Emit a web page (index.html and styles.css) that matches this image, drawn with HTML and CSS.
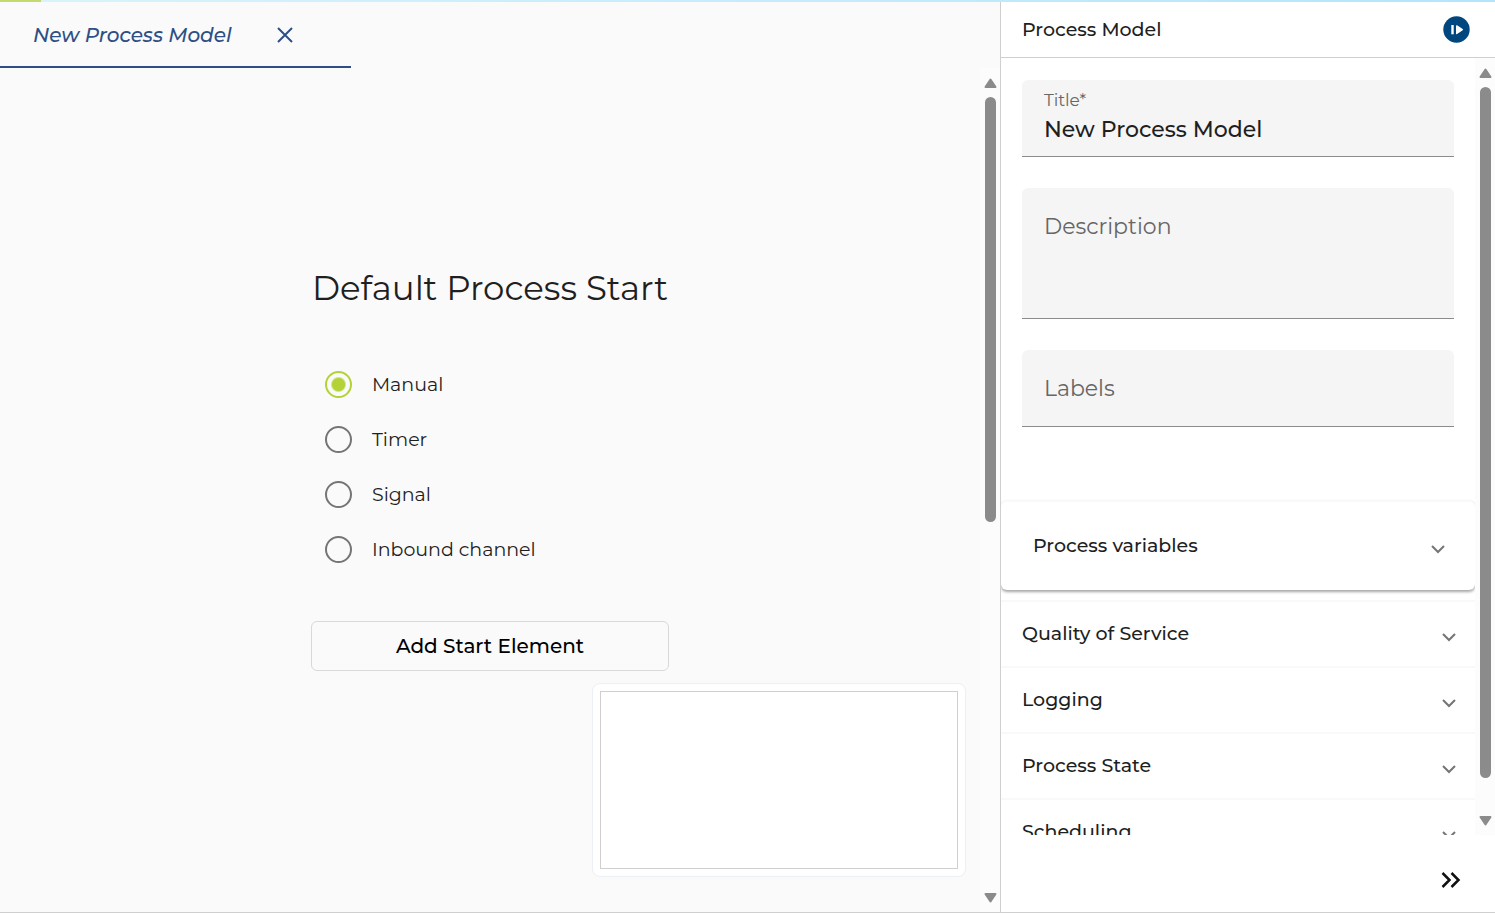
FILE: index.html
```html
<!DOCTYPE html>
<html lang="en">
<head>
<meta charset="utf-8">
<title>New Process Model</title>
<link rel="stylesheet" href="styles.css">
</head>
<body>
<div class="progress"><div class="progress-value"></div></div>
<div class="workspace">
  <main class="editor">
    <div class="tabs">
      <div class="tab">
        <a class="tab-link" href="#model">New Process Model</a>
        <button class="icon-button" type="button" aria-label="Close tab">
          <svg width="16" height="16" viewBox="0 0 16 16" fill="none" stroke="currentColor" stroke-width="2"><path d="M1 1l14 14M15 1L1 15"/></svg>
        </button>
      </div>
    </div>
    <div class="canvas-area">
      <div class="canvas" id="model">
        <form class="start">
          <h1 class="start-title" id="start-title">Default Process Start</h1>
          <div class="options" role="radiogroup" aria-labelledby="start-title">
            <label class="option"><input class="radio" type="radio" name="start" checked>Manual</label>
            <label class="option"><input class="radio" type="radio" name="start">Timer</label>
            <label class="option"><input class="radio" type="radio" name="start">Signal</label>
            <label class="option"><input class="radio" type="radio" name="start">Inbound channel</label>
          </div>
          <button class="add-button" type="button">Add Start Element</button>
        </form>
        <div class="minimap"><div class="minimap-view"></div></div>
      </div>
      <div class="scrollbar" aria-hidden="true">
        <svg class="arrow" width="13" height="10" viewBox="0 0 13 10"><path d="M6.5 1.5L11.5 9h-10z"/></svg>
        <div class="track"><div class="thumb thumb-canvas"></div></div>
        <svg class="arrow" width="13" height="10" viewBox="0 0 13 10"><path d="M6.5 8.5L11.5 1h-10z"/></svg>
      </div>
    </div>
  </main>
  <aside class="panel">
    <header class="panel-header">
      <h2 class="panel-title">Process Model</h2>
      <button class="icon-button" type="button" aria-label="Run">
        <svg width="27" height="27" viewBox="0 0 27 27"><circle cx="13.5" cy="13.5" r="13.2" fill="#00467f"/><path d="M8.3 9h2.4v9.3H8.3z" fill="#fff"/><path d="M13.7 9.9l5.6 3.8-5.6 3.8z" fill="#fff" stroke="#fff" stroke-width="1.4" stroke-linejoin="round"/></svg>
      </button>
    </header>
    <div class="panel-body">
      <div class="panel-content">
        <div class="fields">
          <div class="field">
            <label class="float-label" for="title">Title*</label>
            <input class="field-input" id="title" type="text" value="New Process Model">
          </div>
          <div class="field field-stacked field-tall">
            <label class="field-label" for="description">Description</label>
            <textarea class="field-input" id="description"></textarea>
          </div>
          <div class="field field-stacked">
            <label class="field-label" for="labels">Labels</label>
            <input class="field-input" id="labels" type="text">
          </div>
        </div>
        <button class="section section-raised" type="button">Process variables<svg class="chevron" width="14" height="9" viewBox="0 0 14 9"><path d="M1 1l6 6 6-6"/></svg></button>
        <div class="section-group">
          <button class="section" type="button">Quality of Service<svg class="chevron" width="14" height="9" viewBox="0 0 14 9"><path d="M1 1l6 6 6-6"/></svg></button>
          <button class="section" type="button">Logging<svg class="chevron" width="14" height="9" viewBox="0 0 14 9"><path d="M1 1l6 6 6-6"/></svg></button>
          <button class="section" type="button">Process State<svg class="chevron" width="14" height="9" viewBox="0 0 14 9"><path d="M1 1l6 6 6-6"/></svg></button>
          <button class="section" type="button">Scheduling<svg class="chevron" width="14" height="9" viewBox="0 0 14 9"><path d="M1 1l6 6 6-6"/></svg></button>
        </div>
      </div>
      <div class="scrollbar" aria-hidden="true">
        <svg class="arrow" width="13" height="10" viewBox="0 0 13 10"><path d="M6.5 1.5L11.5 9h-10z"/></svg>
        <div class="track"><div class="thumb thumb-panel"></div></div>
        <svg class="arrow" width="13" height="10" viewBox="0 0 13 10"><path d="M6.5 8.5L11.5 1h-10z"/></svg>
      </div>
    </div>
    <footer class="panel-footer">
      <button class="icon-button" type="button" aria-label="Collapse panel">
        <svg width="20" height="16" viewBox="0 0 20 16" fill="none" stroke="#111" stroke-width="2.5"><path d="M1.5 1l7 7-7 7M10.5 1l7 7-7 7"/></svg>
      </button>
    </footer>
  </aside>
</div>
</body>
</html>
```
FILE: styles.css
```css
* { box-sizing: border-box; }

body {
  margin: 0;
  height: 100vh;
  display: flex;
  flex-direction: column;
  overflow: hidden;
  border-bottom: 1px solid #cfcfcf;
  background: #fafafa;
  color: #1f1f1f;
  font-family: Montserrat, Inter, sans-serif;
  font-size: 19px;
}

h1, h2 { margin: 0; }

button, input, textarea {
  font: inherit;
  color: inherit;
}

.progress {
  flex: none;
  height: 2px;
  background: linear-gradient(90deg, #d9f3fc, #b3e5fa);
}

.progress-value {
  width: 41px;
  height: 100%;
  background: #c3db6e;
}

.workspace {
  flex: 1;
  min-height: 0;
  display: grid;
  grid-template-columns: 202fr 100fr;
  grid-template-rows: minmax(0, 1fr);
}

.editor, .panel {
  display: flex;
  flex-direction: column;
  min-width: 0;
}

.icon-button {
  display: flex;
  padding: 0;
  border: 0;
  background: none;
  cursor: pointer;
}

.tabs { display: flex; }

.tab {
  display: flex;
  align-items: center;
  justify-content: space-between;
  width: 351px;
  height: 66px;
  padding: 2px 58px 0 33px;
  border-bottom: 2px solid #2d4f86;
  color: #2d4f86;
}

.tab-link {
  color: inherit;
  font-size: 20px;
  font-style: italic;
  font-weight: 500;
  text-decoration: none;
}

.canvas-area, .panel-body {
  flex: 1;
  min-height: 0;
  display: flex;
}

.canvas {
  flex: 1;
  position: relative;
  min-width: 0;
}

.start {
  display: flex;
  flex-direction: column;
  width: 358px;
  margin: 0 auto;
  padding-top: 196px;
}

.start-title {
  font-size: 34px;
  font-weight: 400;
  line-height: 48px;
  text-align: center;
  white-space: nowrap;
}

.options {
  padding: 45px 14px 44px;
}

.option {
  display: flex;
  align-items: center;
  gap: 20px;
  height: 55px;
  font-weight: 400;
}

.radio {
  appearance: none;
  width: 27px;
  height: 27px;
  margin: 0;
  border: 2px solid #757575;
  border-radius: 50%;
}

.radio:checked {
  border-color: #b2d235;
  background: radial-gradient(circle, #b2d235 6px, transparent 8px);
}

.add-button {
  height: 50px;
  border: 1px solid #d9d9d9;
  border-radius: 6px;
  background: transparent;
  color: #000;
  font-size: 20px;
  font-weight: 500;
}

.minimap {
  position: absolute;
  right: 14px;
  bottom: 35px;
  width: 374px;
  height: 194px;
  padding: 7px;
  border: 1px solid #eaf0f6;
  border-radius: 8px;
  background: #fff;
}

.minimap-view {
  height: 100%;
  border: 1px solid #cfcfcf;
}

.scrollbar {
  flex: none;
  display: flex;
  flex-direction: column;
  align-items: center;
  gap: 9px;
  width: 20px;
  padding: 10px 0 9px 1px;
  background: #fcfcfc;
}

.arrow {
  flex: none;
  fill: #8b8b8b;
  stroke: #8b8b8b;
  stroke-width: 2;
  stroke-linejoin: round;
}

.track {
  flex: 1;
  min-height: 0;
}

.thumb {
  width: 11px;
  border-radius: 6px;
  background: #8b8b8b;
}

.thumb-canvas { height: 54%; }

.thumb-panel { height: 96%; }

.panel {
  border-left: 1px solid #cfcfcf;
  background: #fff;
}

.panel-header {
  flex: none;
  display: flex;
  align-items: center;
  justify-content: space-between;
  height: 56px;
  padding: 0 25px 0 21px;
  border-bottom: 1px solid #cfcfcf;
}

.panel-title {
  font-size: 19px;
  font-weight: 500;
}

.panel-content {
  flex: 1;
  min-width: 0;
  overflow: hidden;
}

.fields {
  display: grid;
  gap: 31px;
  padding: 22px 21px 73px;
}

.field {
  display: flex;
  flex-direction: column;
  height: 77px;
  padding: 9px 22px;
  border-bottom: 1px solid #8c8c8c;
  border-radius: 6px 6px 0 0;
  background: #f5f5f5;
}

.field-stacked {
  display: grid;
  padding: 22px;
}

.field-tall { height: 131px; }

.float-label {
  color: #666;
  font-size: 17px;
  font-weight: 400;
  line-height: 22px;
}

.field-label {
  grid-area: 1 / 1;
  color: #666;
  font-size: 22px;
  font-weight: 400;
  line-height: 34px;
}

.field-input {
  grid-area: 1 / 1;
  width: 100%;
  padding: 0;
  border: 0;
  outline: 0;
  background: transparent;
  font-size: 22px;
  font-weight: 500;
  line-height: 38px;
  resize: none;
}

.section {
  display: flex;
  align-items: center;
  justify-content: space-between;
  width: 100%;
  height: 66px;
  padding: 0 19px 2px 21px;
  border: 0;
  border-top: 2px solid #f9f9f9;
  background: #fff;
  font-weight: 500;
  text-align: left;
}

.section-raised {
  height: 90px;
  padding: 0 30px 2px 32px;
  border-radius: 6px;
  box-shadow: 0 2px 3px #a6a6a6;
}

.section-group { padding-top: 10px; }

.chevron {
  margin-top: 8px;
  fill: none;
  stroke: #757575;
  stroke-width: 2;
}

.panel-footer {
  flex: none;
  display: flex;
  align-items: center;
  justify-content: flex-end;
  height: 77px;
  padding: 12px 34px 0;
}
```
